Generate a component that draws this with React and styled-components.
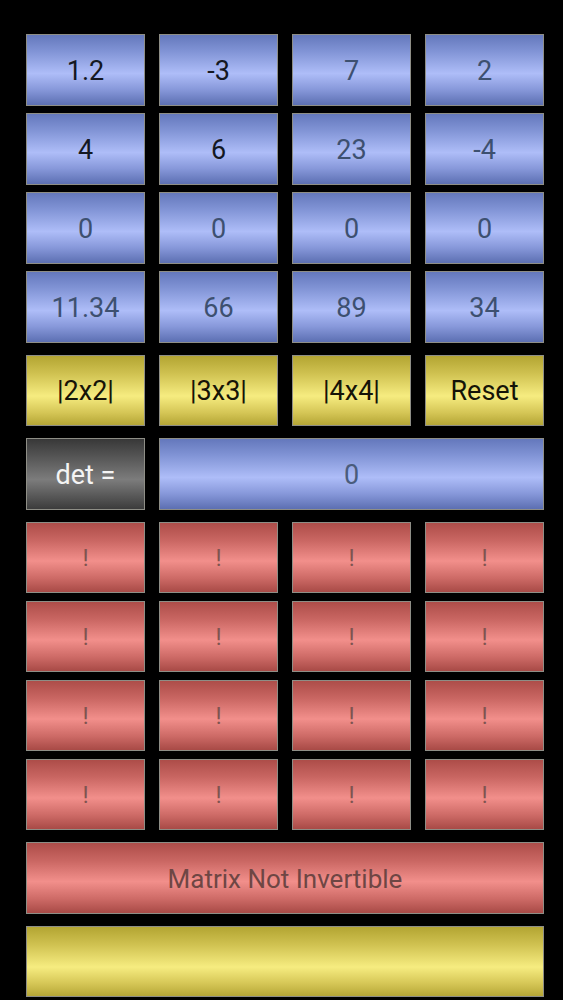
import React from 'react';
import styled, { createGlobalStyle, css } from 'styled-components';

const GlobalStyle = createGlobalStyle`
  html, body {
    margin: 0;
    padding: 0;
    background: #000;
  }
  body {
    font-family: Roboto, "Noto Sans", "Liberation Sans", sans-serif;
  }
`;

const tones = {
  blue: css`
    background: linear-gradient(
      to bottom,
      #6478bc 0%,
      #7f92d4 22%,
      #aebdf8 55%,
      #8798da 78%,
      #5c6fb2 100%
    );
  `,
  yellow: css`
    background: linear-gradient(
      to bottom,
      #b3a532 0%,
      #cfc150 25%,
      #f6ec80 58%,
      #d5c656 82%,
      #b5a636 100%
    );
  `,
  red: css`
    background: linear-gradient(
      to bottom,
      #ad4d49 0%,
      #c96662 25%,
      #f28f8b 55%,
      #cd6a66 80%,
      #a84a46 100%
    );
  `,
  gray: css`
    background: linear-gradient(
      to bottom,
      #383838 0%,
      #555 25%,
      #7c7c7c 58%,
      #575757 82%,
      #3c3c3c 100%
    );
  `,
};

const Page = styled.main`
  display: flex;
  flex-direction: column;
  gap: 12px;
  padding: 34px 19px 0 26px;
`;

const Grid = styled.section`
  display: grid;
  grid-template-columns: repeat(4, 1fr);
  grid-auto-rows: 71.5px;
  column-gap: 14px;
  row-gap: 7.5px;
`;

const Cell = styled.div`
  box-sizing: border-box;
  display: flex;
  align-items: center;
  justify-content: center;
  padding-top: 2px;
  border: 1px solid #8e8e86;
  font-size: ${p => p.$size || 27}px;
  font-weight: 400;
  color: ${p => p.$ink || '#3d5070'};
  grid-column: ${p => (p.$span ? `span ${p.$span}` : 'auto')};
  ${p => tones[p.$tone || 'blue']}
`;

const matrix = [
  ['1.2', '-3', '7', '2'],
  ['4', '6', '23', '-4'],
  ['0', '0', '0', '0'],
  ['11.34', '66', '89', '34'],
];

const darkCells = ['0-0', '0-1', '1-0', '1-1'];

function App() {
  return (
    <>
      <GlobalStyle />
      <Page>
        <Grid>
          {matrix.map((row, r) =>
            row.map((v, c) => (
              <Cell
                key={`${r}-${c}`}
                $ink={darkCells.includes(`${r}-${c}`) ? '#141822' : undefined}
              >
                {v}
              </Cell>
            ))
          )}
        </Grid>
        <Grid>
          {['|2x2|', '|3x3|', '|4x4|', 'Reset'].map(label => (
            <Cell key={label} $tone="yellow" $ink="#151307">
              {label}
            </Cell>
          ))}
        </Grid>
        <Grid>
          <Cell $tone="gray" $ink="#f4f4f4">det =</Cell>
          <Cell $span={3} $ink="#4a5c7c">0</Cell>
        </Grid>
        <Grid>
          {Array.from({ length: 16 }).map((_, i) => (
            <Cell key={i} $tone="red" $ink="#7f5450" $size={24}>
              !
            </Cell>
          ))}
        </Grid>
        <Grid>
          <Cell $span={4} $tone="red" $ink="#6e4644" $size={26}>
            Matrix Not Invertible
          </Cell>
        </Grid>
        <Grid>
          <Cell $span={4} $tone="yellow" />
        </Grid>
      </Page>
    </>
  );
}

export default App;
